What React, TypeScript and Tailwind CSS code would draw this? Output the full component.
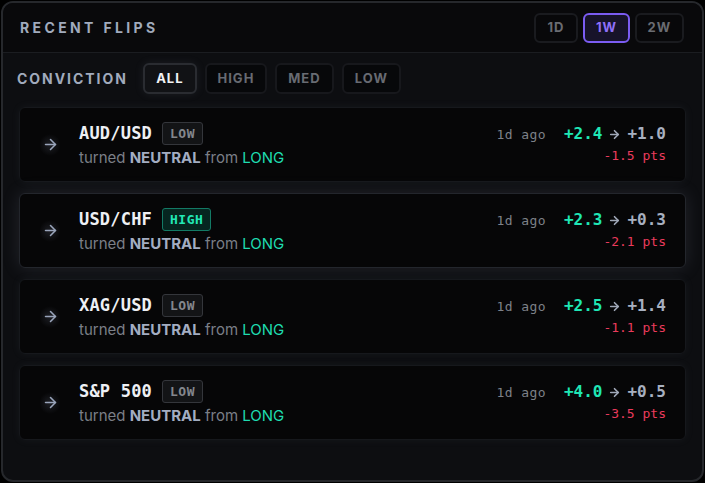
import { ArrowRight } from "lucide-react";

type Flip = {
  symbol: string;
  conviction: "LOW" | "HIGH";
  from: string;
  to: string;
  delta: string;
  active?: boolean;
};

const flips: Flip[] = [
  { symbol: "AUD/USD", conviction: "LOW", from: "+2.4", to: "+1.0", delta: "-1.5" },
  { symbol: "USD/CHF", conviction: "HIGH", from: "+2.3", to: "+0.3", delta: "-2.1", active: true },
  { symbol: "XAG/USD", conviction: "LOW", from: "+2.5", to: "+1.4", delta: "-1.1" },
  { symbol: "S&P 500", conviction: "LOW", from: "+4.0", to: "+0.5", delta: "-3.5" },
];

const mono = "font-['DejaVu_Sans_Mono','Liberation_Mono',monospace]";
const sans = "font-['Inter','Noto_Sans',sans-serif]";

function FlipCard({ flip }: { flip: Flip }) {
  return (
    <div
      className={
        "flex h-[75px] items-center rounded-md border bg-[#060607] pl-[20px] pr-[19px] " +
        (flip.active
          ? "border-[#23262c] shadow-[0_0_18px_rgba(140,150,175,0.16)]"
          : "border-[#16181c] shadow-[0_0_10px_rgba(140,150,175,0.07)]")
      }
    >
      <div className="flex h-6 w-5 items-center justify-center rounded-full bg-[radial-gradient(circle,rgba(150,160,190,0.16),transparent_70%)] text-[#9aa5bb]">
        <ArrowRight size={17} strokeWidth={2.2} />
      </div>
      <div className="ml-[19px] flex flex-col">
        <div className="flex items-center">
          <span className={`${mono} text-[17px] font-bold leading-none tracking-[0.2px] text-[#eef0f4]`}>
            {flip.symbol}
          </span>
          {flip.conviction === "HIGH" ? (
            <span
              className={`${mono} ml-[10px] rounded-[3px] border border-[#137a65] bg-[#062620] px-[7px] py-[4px] text-[13px] font-bold leading-[13px] tracking-[0.5px] text-[#22e8b6]`}
            >
              HIGH
            </span>
          ) : (
            <span
              className={`${mono} ml-[10px] rounded-[3px] border border-[#34363b] bg-[#131416] px-[7px] py-[4px] text-[13px] font-bold leading-[13px] tracking-[0.5px] text-[#84878d]`}
            >
              LOW
            </span>
          )}
        </div>
        <div className={`${sans} mt-[3px] text-[15px] leading-5 text-[#7b7f87]`}>
          turned <span className="font-bold text-[#a3adc2]">NEUTRAL</span> from{" "}
          <span className="text-[#1fdcb0]">LONG</span>
        </div>
      </div>
      <div className="ml-auto flex items-start gap-[18px] self-start pt-[16px]">
        <span className={`${mono} mt-[1px] text-[13px] leading-5 tracking-[0.4px] text-[#7d8188]`}>
          1d ago
        </span>
        <div className="flex flex-col items-end">
          <div className="flex items-center leading-5">
            <span className={`${mono} text-[16px] font-bold text-[#1fe6b5]`}>{flip.from}</span>
            <ArrowRight size={13} strokeWidth={3} className="mx-[6px] text-[#a0a8b8]" />
            <span className={`${mono} text-[16px] font-bold text-[#a8b0c0]`}>{flip.to}</span>
          </div>
          <span className={`${mono} mt-[4px] text-[13px] leading-4 text-[#ea3b5c]`}>
            {flip.delta} pts
          </span>
        </div>
      </div>
    </div>
  );
}

export default function App() {
  const ranges = [
    { label: "1D", w: "w-[44px]" },
    { label: "1W", w: "w-[47px]" },
    { label: "2W", w: "w-[49px]" },
  ];
  const levels = [
    { label: "ALL", w: "w-[54px]" },
    { label: "HIGH", w: "w-[62px]" },
    { label: "MED", w: "w-[59px]" },
    { label: "LOW", w: "w-[59px]" },
  ];

  return (
    <div className="h-[483px] w-[705px] bg-[#000000] p-px">
      <div className="flex h-full flex-col overflow-hidden rounded-xl border-2 border-[#26282c] bg-[#0d0e11]">
        <header className="flex h-[50px] items-center justify-between border-b border-[#1b1d21] bg-[#09090b] pl-[17px] pr-[18px]">
          <h2 className={`${sans} text-[14px] font-bold tracking-[0.24em] text-[#a1abbd]`}>
            RECENT FLIPS
          </h2>
          <div className="flex gap-[5px]">
            {ranges.map((r) => (
              <button
                key={r.label}
                className={
                  `${sans} ${r.w} h-[30px] rounded-md border-2 text-[13px] font-bold tracking-[0.08em] ` +
                  (r.label === "1W"
                    ? "border-[#7b5cf2] bg-[#17132a] text-[#8f70fa]"
                    : "border-[#1a1b1f] bg-[#08080a] text-[#6a6c72]")
                }
              >
                {r.label}
              </button>
            ))}
          </div>
        </header>

        <div className="flex items-center pl-[14px] pt-[10px]">
          <span className={`${sans} text-[14px] font-bold tracking-[0.14em] text-[#a1abbd]`}>
            CONVICTION
          </span>
          <div className="ml-[15px] flex gap-2">
            {levels.map((l) => (
              <button
                key={l.label}
                className={
                  `${sans} ${l.w} h-[31px] rounded-md border-2 text-[13px] font-bold tracking-[0.08em] ` +
                  (l.label === "ALL"
                    ? "border-[#2a2c31] bg-[#111215] text-[#f2f3f5] shadow-[0_0_10px_rgba(160,170,190,0.1)]"
                    : "border-[#17181c] bg-[#07080a] text-[#686b72]")
                }
              >
                {l.label}
              </button>
            ))}
          </div>
        </div>

        <div className="mt-[13px] flex flex-col gap-[11px] px-[16px]">
          {flips.map((f) => (
            <FlipCard key={f.symbol} flip={f} />
          ))}
        </div>
      </div>
    </div>
  );
}
